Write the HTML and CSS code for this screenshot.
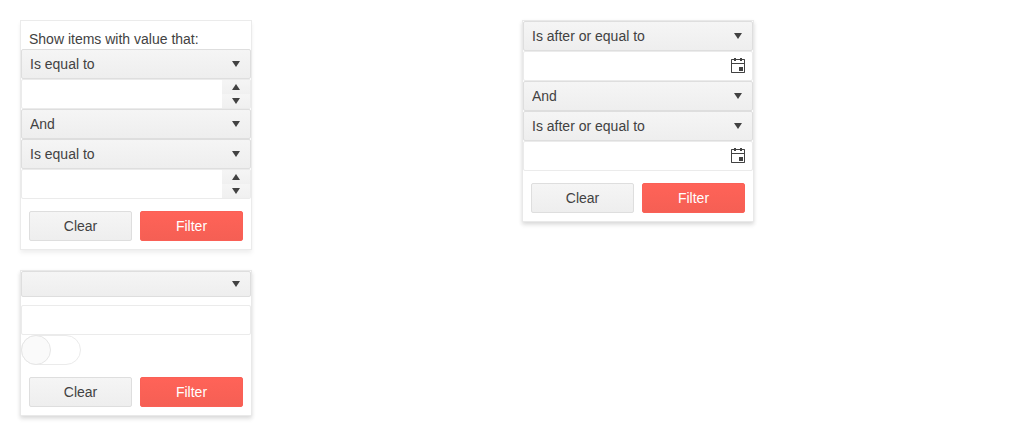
FILE: index.html
```
<!DOCTYPE html>
<html lang="en">
<head>
<meta charset="utf-8">
<title>Filter menus</title>
<link rel="stylesheet" href="styles.css">
</head>
<body>
<svg class="symbols" aria-hidden="true">
  <symbol id="down" viewBox="0 0 16 16"><path d="M4 5h8l-4 6z"/></symbol>
  <symbol id="up" viewBox="0 0 16 16"><path d="M4 11h8l-4-6z"/></symbol>
  <symbol id="calendar" viewBox="0 0 16 16"><path fill-rule="evenodd" d="M4 0h2v1h4V0h2v1h2.500l.5.500v13l-.5.500h-13l-.5-.5v-13l.5-.5H4zM2 2v3h12V2h-2v1h-2V2H6v1H4V2zM2 6v8h12V6zM9 9h4v4H9z"/></symbol>
</svg>
<main class="page">
  <div class="column">
    <form class="menu">
      <div class="menu-title">Show items with value that:</div>
      <div class="picker"><select aria-label="First operator"><option>Is equal to</option></select><svg class="icon picker-arrow"><use href="#down"/></svg></div>
      <div class="field">
        <input type="text" aria-label="First value">
        <div class="spinner">
          <button type="button" aria-label="Increase first value"><svg class="icon"><use href="#up"/></svg></button>
          <button type="button" aria-label="Decrease first value"><svg class="icon"><use href="#down"/></svg></button>
        </div>
      </div>
      <div class="picker"><select aria-label="Logic"><option>And</option></select><svg class="icon picker-arrow"><use href="#down"/></svg></div>
      <div class="picker"><select aria-label="Second operator"><option>Is equal to</option></select><svg class="icon picker-arrow"><use href="#down"/></svg></div>
      <div class="field">
        <input type="text" aria-label="Second value">
        <div class="spinner">
          <button type="button" aria-label="Increase second value"><svg class="icon"><use href="#up"/></svg></button>
          <button type="button" aria-label="Decrease second value"><svg class="icon"><use href="#down"/></svg></button>
        </div>
      </div>
      <div class="actions"><button type="button" class="button">Clear</button><button type="button" class="button primary">Filter</button></div>
    </form>

    <form class="menu raised">
      <div class="picker empty"><select aria-label="Operator"><option></option></select><svg class="icon picker-arrow"><use href="#down"/></svg></div>
      <div class="field"><input type="text" aria-label="Value"></div>
      <input class="switch" type="checkbox" role="switch" aria-label="Enabled">
      <div class="actions"><button type="button" class="button">Clear</button><button type="button" class="button primary">Filter</button></div>
    </form>
  </div>

  <div class="column">
    <form class="menu raised">
      <div class="picker"><select aria-label="First date operator"><option>Is after or equal to</option></select><svg class="icon picker-arrow"><use href="#down"/></svg></div>
      <div class="field">
        <input type="text" aria-label="First date">
        <button type="button" class="date-button" aria-label="Choose first date"><svg class="icon"><use href="#calendar"/></svg></button>
      </div>
      <div class="picker"><select aria-label="Date logic"><option>And</option></select><svg class="icon picker-arrow"><use href="#down"/></svg></div>
      <div class="picker"><select aria-label="Second date operator"><option>Is after or equal to</option></select><svg class="icon picker-arrow"><use href="#down"/></svg></div>
      <div class="field">
        <input type="text" aria-label="Second date">
        <button type="button" class="date-button" aria-label="Choose second date"><svg class="icon"><use href="#calendar"/></svg></button>
      </div>
      <div class="actions"><button type="button" class="button">Clear</button><button type="button" class="button primary">Filter</button></div>
    </form>
  </div>
</main>
</body>
</html>
```
FILE: styles.css
```
*,
*::before {
  box-sizing: border-box;
}

body {
  margin: 0;
  background: #fff;
  color: #424242;
  font: 14px/20px "Liberation Sans", Arial, sans-serif;
}

button,
input,
select {
  margin: 0;
  color: inherit;
  font: inherit;
}

.symbols {
  display: none;
}

.icon {
  display: block;
  width: 16px;
  height: 16px;
  flex: none;
  fill: currentColor;
}

.page {
  display: grid;
  grid-template-columns: 1fr 1fr;
  gap: 20px;
  padding: 20px;
}

.column {
  display: flex;
  flex-direction: column;
  align-items: flex-start;
  gap: 20px;
}

.menu {
  display: flex;
  flex-direction: column;
  width: 232px;
  border: 1px solid #ebebeb;
  background: #fff;
  box-shadow: 0 2px 4px rgba(0, 0, 0, 0.03), 0 4px 5px rgba(0, 0, 0, 0.04);
}

.raised {
  border-color: #e9e9e9;
  box-shadow: 0 2px 4px rgba(0, 0, 0, 0.12), 0 4px 5px rgba(0, 0, 0, 0.04);
}

.menu-title {
  padding: 8px 8px 0;
}

.picker {
  position: relative;
}

.picker select {
  display: block;
  width: 100%;
  height: 30px;
  padding: 0 28px 0 8px;
  border: 1px solid #dedede;
  border-radius: 2px;
  background: linear-gradient(#f5f5f5, #eee);
  appearance: none;
}

.picker.empty {
  margin-bottom: 8px;
}

.picker.empty select {
  height: 26px;
}

.picker-arrow {
  position: absolute;
  top: 0;
  right: 7px;
  bottom: 0;
  margin: auto 0;
  pointer-events: none;
}

.field {
  display: flex;
  height: 30px;
  border: 1px solid #ebebeb;
  border-radius: 2px;
  background: #fff;
}

.field input {
  flex: 1;
  min-width: 0;
  padding: 0 8px;
  border: 0;
  background: none;
}

.spinner {
  display: flex;
  flex-direction: column;
  width: 28px;
}

.spinner button,
.date-button {
  display: flex;
  align-items: center;
  justify-content: center;
  flex: 1;
  min-height: 0;
  padding: 0;
  border: 0;
  background: linear-gradient(#f5f5f5, #f0f0f0);
}

.date-button {
  flex: none;
  width: 28px;
  background: none;
}

.switch {
  display: flex;
  width: 60px;
  height: 30px;
  border: 1px solid #ebebeb;
  border-radius: 15px;
  background: #fff;
  appearance: none;
}

.switch::before {
  content: "";
  width: 30px;
  height: 30px;
  margin: -1px;
  border: 1px solid #e6e6e6;
  border-radius: 50%;
  background: #fafafa;
}

.actions {
  display: flex;
  gap: 8px;
  padding: 12px 8px 8px;
}

.button {
  flex: 1;
  height: 30px;
  padding: 0 8px;
  border: 1px solid #dedede;
  border-radius: 2px;
  background: linear-gradient(#f5f5f5, #eee);
}

.primary {
  border-color: #fa6056;
  background: linear-gradient(#ff6358, #f55f54);
  color: #fff;
}
```
